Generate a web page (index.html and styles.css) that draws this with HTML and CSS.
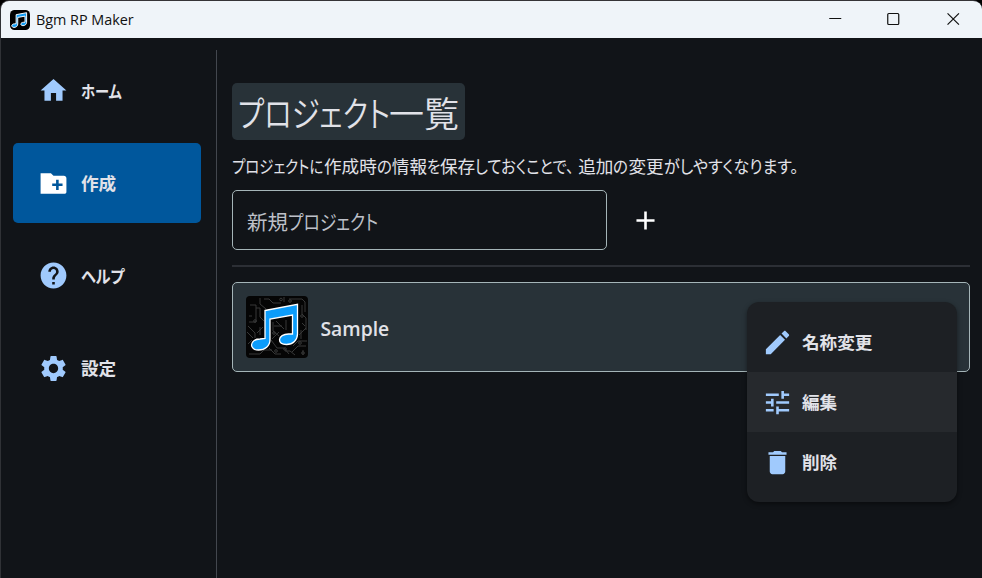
FILE: index.html
```html
<!DOCTYPE html>
<html lang="ja">
<head>
<meta charset="utf-8">
<title>Bgm RP Maker</title>
<link rel="stylesheet" href="styles.css">
</head>
<body>
<svg width="0" height="0" class="defs">
  <defs>
    <path id="note" d="M19 14.5 L51.5 8.3 V38 C51.5 44 47 48.5 40.5 48.5 C36 48.5 33.5 46.5 33.5 43.8 C33.5 40.5 37.5 38 42.5 38 H46.5 V19 L24 23 V43.5 C24 50 19 54 12.5 54 C8 54 5.5 51.5 5.5 49 C5.5 45.5 9 43 14 43 L19 42.5 Z"/>
  </defs>
</svg>
<div class="window">
  <header class="titlebar">
    <svg class="app-icon" viewBox="0 0 62 62"><rect width="62" height="62" rx="14" fill="#000"/><use href="#note" fill="#109df5" stroke="#fff" stroke-width="3"/></svg>
    <span class="app-name">Bgm RP Maker</span>
    <div class="controls">
      <svg viewBox="0 0 58 37"><path d="M20 17.500H32"/></svg>
      <svg viewBox="0 0 58 37"><rect x="20.500" y="12.500" width="11" height="11" rx="1"/></svg>
      <svg viewBox="0 0 58 37"><path d="M21.300 12.300L32.700 23.700M32.700 12.300L21.300 23.700"/></svg>
    </div>
  </header>
  <div class="body">
    <nav class="sidebar">
      <a class="nav-item"><svg class="icon" viewBox="0 0 24 24"><path d="M10 20v-6h4v6h5v-8h3L12 3 2 12h3v8z"/></svg><span class="kana k-home">ホーム</span></a>
      <a class="nav-item active"><svg class="icon" viewBox="0 0 24 24"><path d="M20 6h-8l-2-2H2v16h18.500c.8 0 1.500-.7 1.500-1.500V8c0-1.100-.9-2-2-2zm-1 8h-3v3h-2v-3h-3v-2h3V9h2v3h3v2z"/></svg><span>作成</span></a>
      <a class="nav-item"><svg class="icon" viewBox="0 0 24 24"><path d="M12 2C6.480 2 2 6.480 2 12s4.480 10 10 10 10-4.480 10-10S17.520 2 12 2zm1 17h-2v-2h2v2zm2.070-7.750l-.9.920C13.450 12.900 13 13.500 13 15h-2v-.5c0-1.100.45-2.100 1.170-2.830l1.240-1.260c.37-.36.59-.86.59-1.410 0-1.100-.9-2-2-2s-2 .9-2 2H8c0-2.210 1.790-4 4-4s4 1.790 4 4c0 .88-.36 1.680-.93 2.250z"/></svg><span class="kana k-help">ヘルプ</span></a>
      <a class="nav-item"><svg class="icon" viewBox="0 0 24 24"><path d="M19.140 12.940c.04-.3.060-.61.060-.94 0-.32-.02-.64-.07-.94l2.030-1.580c.18-.14.23-.41.12-.61l-1.920-3.320c-.12-.22-.37-.29-.59-.22l-2.390.96c-.5-.38-1.030-.7-1.620-.94l-.36-2.540c-.04-.24-.24-.41-.48-.41h-3.840c-.24 0-.43.17-.47.41l-.36 2.540c-.59.24-1.130.57-1.620.94l-2.390-.96c-.22-.08-.47 0-.59.22L2.740 8.870c-.12.210-.08.470.12.610l2.030 1.580c-.05.3-.09.630-.09.940s.02.640.07.940l-2.030 1.580c-.18.140-.23.410-.12.610l1.920 3.320c.12.220.37.290.59.220l2.390-.96c.5.380 1.030.7 1.620.94l.36 2.540c.05.240.24.410.48.410h3.840c.24 0 .44-.17.470-.41l.36-2.540c.59-.24 1.130-.56 1.620-.94l2.390.96c.22.080.47 0 .59-.22l1.920-3.320c.12-.22.070-.47-.12-.61l-2.010-1.580zM12 15.600c-1.980 0-3.600-1.620-3.600-3.600s1.620-3.600 3.600-3.600 3.600 1.620 3.600 3.600-1.620 3.600-3.600 3.600z"/></svg><span>設定</span></a>
    </nav>
    <main class="content">
      <h1 class="heading"><span class="kana k-title">プロジェクト</span>一覧</h1>
      <p class="lead"><span class="kana w1">プロジェクトに</span>作成時<span class="kana w2">の</span>情報<span class="kana w3">を</span>保存<span class="kana w4">しておくことで、</span>追加<span class="kana w2">の</span>変更<span class="kana w5">がしやすくなります。</span></p>
      <div class="create-row">
        <div class="field">新規<span class="kana k-field">プロジェクト</span></div>
        <svg class="icon add" viewBox="0 0 24 24"><path d="M19 13h-6v6h-2v-6H5v-2h6V5h2v6h6v2z"/></svg>
      </div>
      <div class="card">
        <svg class="thumb" viewBox="0 0 62 62">
          <rect width="62" height="62" rx="4" fill="#050505"/>
          <g fill="none" stroke="#383939" stroke-width="1">
            <path d="M4 9h6v17h-7M2 30l7 7v5M14 2v6l6 5M18 3h5l4 4h8M38 1v5M43 3h13l3 3v10M56 9v9l4 4v12M10 12h4v9l4 4M3 20h3M1 36l6 6M27 26v9l6 5M30 25l8 8M40 24v10M28 30h8M25 44l6 8h7l5 6M23 52l6 6h6M3 58h11l4-4h8M47 50l5-5h9M46 56l6-6h8M53 39l7-7M55 43v-9M39 55h5l5 4M2 48l4-4M14 31v8M11 37l6-6M33 36l-7 7M56 27l3 3M57 54v5"/>
            <circle cx="35" cy="3.500" r="1.300"/><circle cx="9" cy="25" r="1.300"/><circle cx="44" cy="5" r="1.300"/><circle cx="56" cy="20" r="1.300"/><circle cx="39" cy="53" r="1.300"/><circle cx="30" cy="55" r="1.300"/><circle cx="54" cy="47" r="1.300"/><circle cx="28" cy="37" r="1.300"/><circle cx="57" cy="57" r="1.300"/>
          </g>
          <use href="#note" fill="#0c9cfa" stroke="#fff" stroke-width="1.300"/>
        </svg>
        <span class="card-name">Sample</span>
        <div class="menu">
          <div class="menu-item"><svg class="icon" viewBox="0 0 24 24"><path d="M3 17.250V21h3.750L17.810 9.940l-3.750-3.750L3 17.250zM20.710 7.040c.39-.39.39-1.020 0-1.410l-2.340-2.340c-.39-.39-1.020-.39-1.410 0l-1.830 1.830 3.750 3.750 1.830-1.830z"/></svg><span>名称変更</span></div>
          <div class="menu-item hover"><svg class="icon" viewBox="0 0 24 24"><path d="M3 17v2h6v-2H3zM3 5v2h10V5H3zm10 16v-2h8v-2h-8v-2h-2v6h2zM7 9v2H3v2h4v2h2V9H7zm14 4v-2H11v2h10zm-6-4h2V7h4V5h-4V3h-2v6z"/></svg><span>編集</span></div>
          <div class="menu-item"><svg class="icon" viewBox="0 0 24 24"><path d="M6 19c0 1.100.9 2 2 2h8c1.100 0 2-.9 2-2V7H6v12zM19 4h-3.500l-1-1h-5l-1 1H5v2h14V4z"/></svg><span>削除</span></div>
        </div>
      </div>
    </main>
  </div>
</div>
</body>
</html>
```
FILE: styles.css
```css
* { box-sizing: border-box; }
html, body { margin: 0; height: 100%; overflow: hidden; background: #000; }
body { font-family: "Noto Sans CJK JP", "Noto Sans", sans-serif; color: #e1e2e8; }
.defs { position: absolute; }
.window {
  height: 578px;
  border-top: 1px solid #353437;
  border-left: 1px solid #303236;
  border-radius: 9px 9px 0 0;
  background: #111418;
  overflow: hidden;
  display: flex;
  flex-direction: column;
}
.titlebar {
  height: 37px;
  flex: none;
  display: flex;
  align-items: center;
  padding-left: 9px;
  background: #eff4f9;
  color: #111;
}
.app-icon { width: 20px; height: 20px; margin-right: 6px; }
.app-name { font: 14.4px/20px "Open Sans", "Noto Sans", sans-serif; letter-spacing: -0.02px; }
.controls { margin-left: auto; display: flex; height: 37px; margin-right: -2px; }
.controls svg { width: 58.500px; height: 37px; fill: none; stroke: #111; stroke-width: 1.200; }

.body { flex: 1; display: flex; min-height: 0; }
.sidebar {
  width: 216px;
  margin-top: 12px;
  padding-left: 12px;
  border-right: 1px solid #43474e;
  display: flex;
  flex-direction: column;
  gap: 12.500px;
  flex: none;
}
.nav-item {
  width: 188px;
  height: 80px;
  border-radius: 5px;
  padding: 1px 0 0 25px;
  display: flex;
  align-items: center;
  gap: 12px;
  font-size: 17.600px;
  font-weight: 700;
  line-height: 26px;
}
.icon { width: 31px; height: 31px; fill: #a0cafd; flex: none; }
.active { background: #00579c; }
.active .icon { fill: #fff; }

.kana {
  display: inline-block;
  white-space: nowrap;
  transform-origin: 0 50%;
  font-feature-settings: "palt";
}
.k-home { width: 41px; transform: scaleX(.81); }
.k-help { width: 44px; transform: scaleX(.86); }
.k-title { width: 151px; transform: scaleX(.81); }
.k-field { width: 90px; transform: scaleX(.82); }
.w1 { width: 92px; transform: scaleX(.82); }
.w2 { width: 15px; transform: scaleX(.88); }
.w3 { width: 13px; transform: scaleX(.82); }
.w4 { width: 103px; transform: scaleX(.87); }
.w5 { width: 135px; transform: scaleX(.91); }

.content { flex: 1; padding: 45px 12px 0 15px; min-width: 0; }
.heading {
  margin: 0;
  width: 233px;
  height: 57px;
  padding-left: 6px;
  border-radius: 5px;
  background: #283238;
  font-size: 35px;
  line-height: 58px;
  font-weight: 350;
  white-space: nowrap;
}
.lead { margin: 13px 0 1px; font-size: 17.600px; line-height: 26px; height: 26px; font-weight: 400; white-space: nowrap; }
.create-row {
  display: flex;
  align-items: center;
  height: 87px;
  padding-bottom: 5px;
  border-bottom: 2px solid #2c2f35;
}
.field {
  width: 375px;
  height: 60px;
  border: 1px solid #a5b5b8;
  border-radius: 5px;
  padding-left: 14px;
  font-size: 20.500px;
  line-height: 61px;
  color: #bdc0c8;
}
.add { margin: 1px 0 0 22.500px; fill: #fff; }
.card {
  position: relative;
  margin-top: 15px;
  height: 90px;
  border: 1px solid #a5b5b8;
  border-radius: 5px;
  background: #283238;
  display: flex;
  align-items: center;
  padding-left: 13px;
}
.thumb { width: 62px; height: 62px; }
.card-name { margin-left: 12.500px; font: 600 19.300px/28px "Open Sans", "Noto Sans", sans-serif; padding-top: 4px; }
.menu {
  position: absolute;
  top: 19px;
  right: 12px;
  width: 210px;
  height: 200px;
  padding: 10px 0;
  border-radius: 12px;
  background: #1d2024;
  box-shadow: 0 2px 5px rgba(0, 0, 0, .45);
}
.menu-item {
  height: 60px;
  display: flex;
  align-items: center;
  gap: 9.500px;
  padding-left: 14.500px;
  font-size: 17.600px;
  font-weight: 700;
  line-height: 26px;
}
.hover { background: #26292d; }
```
